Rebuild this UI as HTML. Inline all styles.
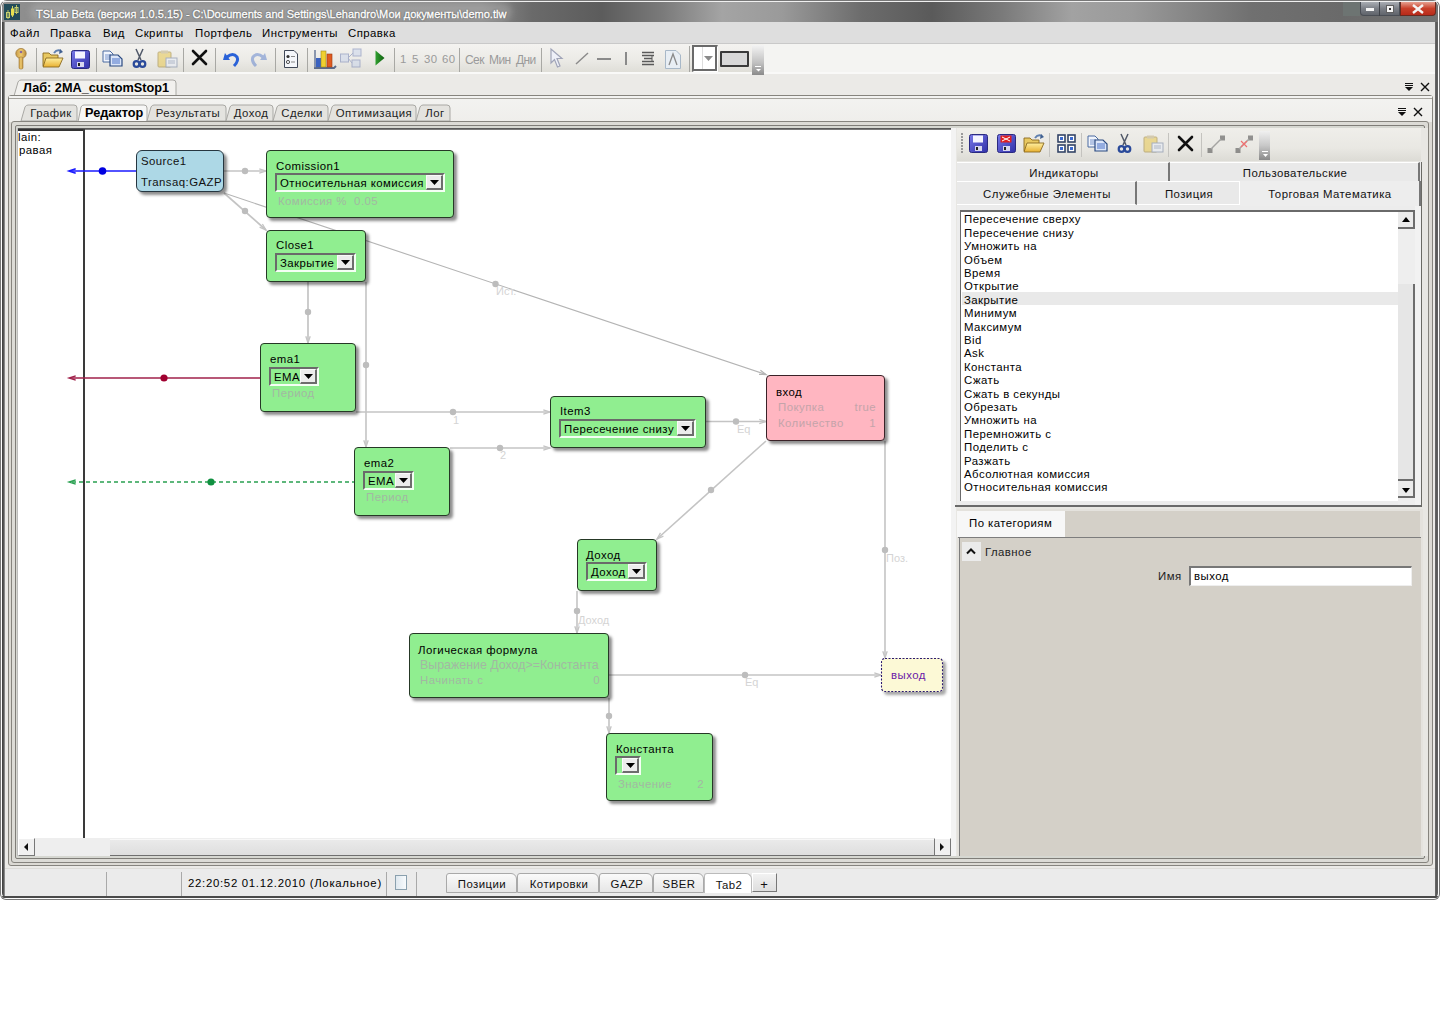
<!DOCTYPE html>
<html><head><meta charset="utf-8">
<style>
*{box-sizing:border-box;margin:0;padding:0}
html,body{width:1440px;height:1024px;overflow:hidden;background:#fff;font-family:"Liberation Sans",sans-serif;font-size:12px;color:#000}
.a{position:absolute}
.t{position:absolute;white-space:nowrap;line-height:1}
svg{position:absolute;overflow:visible}
</style></head><body>
<div class="a" style="left:0px;top:0px;width:1440px;height:900px;background:#777;border-radius:7px 7px 6px 6px"></div><div class="a" style="left:1px;top:1px;width:1438px;height:898px;background:#fdfdfd;border-radius:6px 6px 5px 5px"></div><div class="a" style="left:2px;top:1px;width:1436px;height:897px;background:linear-gradient(90deg,#444 0 1px,#555 1px 2px,#888 2px 3px,#d4d4d0 3px 1433px,#666 1433px 1434px,#5a5a5a 1434px 1435px,#606060 1435px 1436px);border-radius:6px 6px 5px 5px"></div><div class="a" style="left:5px;top:22px;width:1430px;height:874px;background:#e6e6e6"></div><div class="a" style="left:2px;top:2px;width:1436px;height:20px;background:linear-gradient(90deg,#8e8e8e 0px,#8c8c8c 480px,#6a6a6a 530px,#5c5c5c 600px,#7a7a7a 660px,#a4a4a4 720px,#9a9a9a 780px,#6c6c6c 860px,#5a5a5a 930px,#7a7a7a 1000px,#a2a2a2 1070px,#9a9a9a 1130px,#707070 1250px,#6a6a6a 1340px,#727272 1440px);border-radius:5px 5px 0 0"></div><div class="a" style="left:30px;top:3px;width:482px;height:18px;background:rgba(190,190,190,0.35);border-radius:9px;filter:blur(3px)"></div><div class="a" style="left:2px;top:1px;width:1436px;height:1px;background:#f0f0f0;border-radius:5px 5px 0 0"></div><div class="a" style="left:4px;top:4px;width:16px;height:16px;background:#234c5a"></div><svg style="left:4px;top:4px" width="16" height="16"><path d="M4 6 V15" stroke="#b8c060"/><rect x="2.5" y="8.5" width="3" height="5" fill="none" stroke="#c8d070"/><path d="M8.5 2 V13" stroke="#d0d060"/><rect x="7" y="4.5" width="3" height="7" fill="#e8e050"/><path d="M12.5 1 V10" stroke="#b8c060"/><rect x="11" y="3.5" width="3" height="5" fill="none" stroke="#c8d070"/></svg><div class="t" style="left:36px;top:8.7px;font-size:11px;color:#fff;font-weight:400;-webkit-text-stroke:0.35px #fff;text-shadow:0 0 1px #333,0 0 2px #555">TSLab Beta (версия 1.0.5.15) - C:\Documents and Settings\Lehandro\Мои документы\demo.tlw</div><div class="a" style="left:1343px;top:2px;width:17px;height:14px;background:#6d7472"></div><div class="a" style="left:1360px;top:2px;width:40px;height:14px;background:linear-gradient(#a9adb3,#7c8087 50%,#60646b);border:1px solid #4a4e55;border-top:none;border-radius:0 0 0 4px"></div><div class="a" style="left:1379px;top:2px;width:1px;height:14px;background:#3e4248"></div><div class="a" style="left:1366px;top:8px;width:8px;height:3px;background:#f4f4f4"></div><div class="a" style="left:1386px;top:5px;width:8px;height:8px;background:#f4f4f4;border:1px solid #606060"></div><div class="a" style="left:1389px;top:8px;width:2px;height:2px;background:#333"></div><div class="a" style="left:1400px;top:2px;width:36px;height:14px;background:linear-gradient(#e6a090,#c8402a 50%,#b82a1a);border:1px solid #6a2a20;border-top:none;border-radius:0 0 4px 0"></div><svg style="left:1411px;top:4px" width="14" height="10"><path d="M2 1 L12 9 M12 1 L2 9" stroke="#f4f4f4" stroke-width="2.4"/></svg><div class="a" style="left:5px;top:22px;width:1430px;height:21px;background:#dedede"></div><div class="t" style="left:10px;top:28.3px;font-size:11.4px;color:#000;font-weight:400;letter-spacing:0.45px;">Файл</div><div class="t" style="left:50px;top:28.3px;font-size:11.4px;color:#000;font-weight:400;letter-spacing:0.45px;">Правка</div><div class="t" style="left:103px;top:28.3px;font-size:11.4px;color:#000;font-weight:400;letter-spacing:0.45px;">Вид</div><div class="t" style="left:135px;top:28.3px;font-size:11.4px;color:#000;font-weight:400;letter-spacing:0.45px;">Скрипты</div><div class="t" style="left:195px;top:28.3px;font-size:11.4px;color:#000;font-weight:400;letter-spacing:0.45px;">Портфель</div><div class="t" style="left:262px;top:28.3px;font-size:11.4px;color:#000;font-weight:400;letter-spacing:0.45px;">Инструменты</div><div class="t" style="left:348px;top:28.3px;font-size:11.4px;color:#000;font-weight:400;letter-spacing:0.45px;">Справка</div><div class="a" style="left:5px;top:43px;width:1430px;height:1px;background:#c9c9c9"></div><div class="a" style="left:5px;top:44px;width:1430px;height:30px;background:#f4f4f2"></div><div class="a" style="left:5px;top:44px;width:759px;height:28px;background:linear-gradient(#f4f3f0,#ecebe7 55%,#dfded8)"></div><div class="a" style="left:5px;top:72px;width:1430px;height:2px;background:#f9f9f8"></div><div class="a" style="left:5px;top:74px;width:1430px;height:795px;background:#ebeae7"></div><svg style="left:0;top:0" width="1440" height="130"><path d="M14 96 L18 82 Q19 80 21 80 L173 80 Q176 80 176 83 L176 96" fill="#f2f1ee" stroke="#a9a8a4" stroke-width="1"/></svg><div class="t" style="left:23px;top:82.2px;font-size:12.7px;color:#000;font-weight:700;">Лаб: 2MA_customStop1</div><svg style="left:1404px;top:82px" width="30" height="10"><path d="M1 1.5 H9 M1 3.5 H9" stroke="#111" stroke-width="1.2"/><path d="M1 5 L9 5 L5 9 Z" fill="#111"/><path d="M17 1 L25 9 M25 1 L17 9" stroke="#111" stroke-width="1.4"/></svg><div class="a" style="left:8px;top:95px;width:1425px;height:771px;border:1px solid #86847e;background:#dcdad4;border-radius:3px"></div><div class="a" style="left:9px;top:96px;width:1423px;height:26px;background:linear-gradient(#f3f3f1,#efeeeb)"></div><div class="a" style="left:9px;top:98px;width:1423px;height:1px;background:#a6a49e"></div><svg style="left:0;top:0" width="500" height="130"><path d="M21 121 L25 107 Q26 105 28 105 L74 105 Q77 105 77 108 L77 121 Z" fill="#e4e3df" stroke="#a9a8a4"/><path d="M78 122 L81 107 Q82 105 84 105 L144 105 Q147 105 147 108 L147 122" fill="#f7f7f6" stroke="#a9a8a4"/><path d="M147 121 L151 107 Q152 105 154 105 L223 105 Q226 105 226 108 L226 121 Z" fill="#e4e3df" stroke="#a9a8a4"/><path d="M226 121 L230 107 Q231 105 233 105 L270 105 Q273 105 273 108 L273 121 Z" fill="#e4e3df" stroke="#a9a8a4"/><path d="M273 121 L277 107 Q278 105 280 105 L325 105 Q328 105 328 108 L328 121 Z" fill="#e4e3df" stroke="#a9a8a4"/><path d="M328 121 L332 107 Q333 105 335 105 L413 105 Q416 105 416 108 L416 121 Z" fill="#e4e3df" stroke="#a9a8a4"/><path d="M416 121 L420 107 Q421 105 423 105 L447 105 Q450 105 450 108 L450 121 Z" fill="#e4e3df" stroke="#a9a8a4"/></svg><div class="t" style="left:-149px;width:400px;text-align:center;top:108.3px;font-size:11.4px;color:#222;font-weight:400;letter-spacing:0.45px;">График</div><div class="t" style="left:85px;top:107.2px;font-size:12.7px;color:#000;font-weight:700;">Редактор</div><div class="t" style="left:-12px;width:400px;text-align:center;top:108.3px;font-size:11.4px;color:#222;font-weight:400;letter-spacing:0.45px;">Результаты</div><div class="t" style="left:51px;width:400px;text-align:center;top:108.3px;font-size:11.4px;color:#222;font-weight:400;letter-spacing:0.45px;">Доход</div><div class="t" style="left:102px;width:400px;text-align:center;top:108.3px;font-size:11.4px;color:#222;font-weight:400;letter-spacing:0.45px;">Сделки</div><div class="t" style="left:174px;width:400px;text-align:center;top:108.3px;font-size:11.4px;color:#222;font-weight:400;letter-spacing:0.45px;">Оптимизация</div><div class="t" style="left:235px;width:400px;text-align:center;top:108.3px;font-size:11.4px;color:#222;font-weight:400;letter-spacing:0.45px;">Лог</div><svg style="left:1397px;top:107px" width="30" height="10"><path d="M1 1.5 H9 M1 3.5 H9" stroke="#111" stroke-width="1.2"/><path d="M1 5 L9 5 L5 9 Z" fill="#111"/><path d="M17 1 L25 9 M25 1 L17 9" stroke="#111" stroke-width="1.4"/></svg><div class="a" style="left:11px;top:121px;width:1418px;height:742px;border:1px solid #86847e;background:#dcdbd6;border-radius:3px"></div><div class="a" style="left:15px;top:125px;width:1410px;height:734px;border:1px solid #7f7d78;background:#d6d7d1;border-radius:2px"></div><div class="a" style="left:17px;top:128px;width:935px;height:728px;background:#f4f4f4;border:1px solid #bdbdbd"></div><div class="a" style="left:18px;top:129px;width:933px;height:709px;background:#fff"></div><div class="a" style="left:18px;top:128px;width:933px;height:2px;background:linear-gradient(#4a4a4a,#8a8a8a)"></div><div class="a" style="left:18px;top:129px;width:65px;height:2px;background:#333"></div><div class="a" style="left:83px;top:129px;width:2px;height:709px;background:#3a3a3a"></div><div class="t" style="left:18px;top:132.3px;font-size:11.4px;color:#000;font-weight:400;letter-spacing:0.45px;">lain:</div><div class="t" style="left:19px;top:145.3px;font-size:11.4px;color:#000;font-weight:400;letter-spacing:0.45px;">равая</div><div class="a" style="left:18px;top:838px;width:933px;height:18px;background:#eeeeee"></div><div class="a" style="left:18px;top:838px;width:17px;height:18px;background:#f0f0f0;border-right:1px solid #777;border-bottom:1px solid #777;border-top:1px solid #fff;border-left:1px solid #fff"></div><svg style="left:23px;top:843px" width="6" height="8"><path d="M5 0 L1 4 L5 8 Z" fill="#111"/></svg><div class="a" style="left:110px;top:839px;width:824px;height:17px;background:linear-gradient(#eaeaea,#dedede);border-bottom:1px solid #6f6f6f;border-top:1px solid #f8f8f8"></div><div class="a" style="left:934px;top:838px;width:17px;height:18px;background:#f0f0f0;border-right:1px solid #777;border-bottom:1px solid #777;border-top:1px solid #fff;border-left:1px solid #777"></div><svg style="left:940px;top:843px" width="6" height="8"><path d="M0 0 L4 4 L0 8 Z" fill="#111"/></svg><div class="a" style="left:951px;top:128px;width:5px;height:728px;background:#f3f3f3"></div><div class="a" style="left:956px;top:128px;width:472px;height:728px;background:#e8e7e3"></div><div class="a" style="left:957px;top:128px;width:464px;height:33px;background:linear-gradient(#efeeea,#e9e8e3 60%,#dcdbd5)"></div><svg style="left:961px;top:133px" width="3" height="22"><rect x="0" y="0" width="2" height="2" fill="#9a9a9a"/><rect x="0" y="3" width="2" height="2" fill="#9a9a9a"/><rect x="0" y="6" width="2" height="2" fill="#9a9a9a"/><rect x="0" y="9" width="2" height="2" fill="#9a9a9a"/><rect x="0" y="12" width="2" height="2" fill="#9a9a9a"/><rect x="0" y="15" width="2" height="2" fill="#9a9a9a"/><rect x="0" y="18" width="2" height="2" fill="#9a9a9a"/></svg><div class="a" style="left:1049px;top:133px;width:1px;height:24px;background:#c4c3bf"></div><div class="a" style="left:1081px;top:133px;width:1px;height:24px;background:#c4c3bf"></div><div class="a" style="left:1168px;top:133px;width:1px;height:24px;background:#c4c3bf"></div><div class="a" style="left:1201px;top:133px;width:1px;height:24px;background:#c4c3bf"></div><div class="a" style="left:1259px;top:131px;width:11px;height:29px;background:linear-gradient(#f0f0f0,#c8c8c8 50%,#8a8a8a)"></div><svg style="left:1262px;top:151px" width="7" height="7"><path d="M0 0.5 H6" stroke="#fff"/><path d="M1 3 L6 3 L3.5 6 Z" fill="#fff"/></svg><div class="a" style="left:957px;top:162px;width:464px;height:44px;background:#ebebeb"></div><div class="a" style="left:957px;top:162px;width:213px;height:19px;background:#e9e9e9;border-top:1px solid #fff;border-right:2px solid #777"></div><div class="a" style="left:1170px;top:162px;width:250px;height:19px;background:#e9e9e9;border-top:1px solid #fff;border-right:2px solid #777"></div><div class="a" style="left:957px;top:181px;width:180px;height:24px;background:#e9e9e9;border-top:1px solid #fff;border-right:2px solid #777;border-bottom:1px solid #fff"></div><div class="a" style="left:1137px;top:181px;width:103px;height:24px;background:#e9e9e9;border-top:1px solid #fff;border-right:1px solid #fff;border-bottom:1px solid #fff"></div><div class="a" style="left:1240px;top:181px;width:181px;height:26px;background:#ededed;border-right:2px solid #777"></div><div class="t" style="left:864px;width:400px;text-align:center;top:168.3px;font-size:11.4px;color:#111;font-weight:400;letter-spacing:0.45px;">Индикаторы</div><div class="t" style="left:1095px;width:400px;text-align:center;top:168.3px;font-size:11.4px;color:#111;font-weight:400;letter-spacing:0.45px;">Пользовательские</div><div class="t" style="left:847px;width:400px;text-align:center;top:189.3px;font-size:11.4px;color:#111;font-weight:400;letter-spacing:0.45px;">Служебные Элементы</div><div class="t" style="left:989px;width:400px;text-align:center;top:189.3px;font-size:11.4px;color:#111;font-weight:400;letter-spacing:0.45px;">Позиция</div><div class="t" style="left:1130px;width:400px;text-align:center;top:189.3px;font-size:11.4px;color:#111;font-weight:400;letter-spacing:0.45px;">Торговая Математика</div><div class="a" style="left:957px;top:206px;width:464px;height:301px;background:#ececec"></div><div class="a" style="left:960px;top:210px;width:455px;height:291px;background:#fff;border-top:2px solid #6a6a6a;border-left:1px solid #6a6a6a"></div><div class="a" style="left:1415px;top:206px;width:6px;height:299px;background:#f2f2f2"></div><div class="a" style="left:955px;top:505px;width:466px;height:2px;background:#6a6a6a"></div><div class="a" style="left:1421px;top:162px;width:1px;height:345px;background:#6a6a64"></div><div class="a" style="left:962px;top:292px;width:436px;height:13px;background:#e9e9e9"></div><div class="t" style="left:964px;top:214.3px;font-size:11.4px;color:#000;font-weight:400;letter-spacing:0.45px;">Пересечение сверху</div><div class="t" style="left:964px;top:227.7px;font-size:11.4px;color:#000;font-weight:400;letter-spacing:0.45px;">Пересечение снизу</div><div class="t" style="left:964px;top:241.1px;font-size:11.4px;color:#000;font-weight:400;letter-spacing:0.45px;">Умножить на</div><div class="t" style="left:964px;top:254.5px;font-size:11.4px;color:#000;font-weight:400;letter-spacing:0.45px;">Объем</div><div class="t" style="left:964px;top:267.9px;font-size:11.4px;color:#000;font-weight:400;letter-spacing:0.45px;">Время</div><div class="t" style="left:964px;top:281.3px;font-size:11.4px;color:#000;font-weight:400;letter-spacing:0.45px;">Открытие</div><div class="t" style="left:964px;top:294.7px;font-size:11.4px;color:#000;font-weight:400;letter-spacing:0.45px;">Закрытие</div><div class="t" style="left:964px;top:308.1px;font-size:11.4px;color:#000;font-weight:400;letter-spacing:0.45px;">Минимум</div><div class="t" style="left:964px;top:321.5px;font-size:11.4px;color:#000;font-weight:400;letter-spacing:0.45px;">Максимум</div><div class="t" style="left:964px;top:334.9px;font-size:11.4px;color:#000;font-weight:400;letter-spacing:0.45px;">Bid</div><div class="t" style="left:964px;top:348.3px;font-size:11.4px;color:#000;font-weight:400;letter-spacing:0.45px;">Ask</div><div class="t" style="left:964px;top:361.7px;font-size:11.4px;color:#000;font-weight:400;letter-spacing:0.45px;">Константа</div><div class="t" style="left:964px;top:375.1px;font-size:11.4px;color:#000;font-weight:400;letter-spacing:0.45px;">Сжать</div><div class="t" style="left:964px;top:388.5px;font-size:11.4px;color:#000;font-weight:400;letter-spacing:0.45px;">Сжать в секунды</div><div class="t" style="left:964px;top:401.9px;font-size:11.4px;color:#000;font-weight:400;letter-spacing:0.45px;">Обрезать</div><div class="t" style="left:964px;top:415.3px;font-size:11.4px;color:#000;font-weight:400;letter-spacing:0.45px;">Умножить на</div><div class="t" style="left:964px;top:428.7px;font-size:11.4px;color:#000;font-weight:400;letter-spacing:0.45px;">Перемножить с</div><div class="t" style="left:964px;top:442.1px;font-size:11.4px;color:#000;font-weight:400;letter-spacing:0.45px;">Поделить с</div><div class="t" style="left:964px;top:455.5px;font-size:11.4px;color:#000;font-weight:400;letter-spacing:0.45px;">Разжать</div><div class="t" style="left:964px;top:468.9px;font-size:11.4px;color:#000;font-weight:400;letter-spacing:0.45px;">Абсолютная комиссия</div><div class="t" style="left:964px;top:482.3px;font-size:11.4px;color:#000;font-weight:400;letter-spacing:0.45px;">Относительная комиссия</div><div class="a" style="left:1398px;top:212px;width:17px;height:293px;background:#eeeeee"></div><div class="a" style="left:1398px;top:212px;width:17px;height:17px;background:#ebebeb;border-right:2px solid #6d6d6d;border-bottom:2px solid #6d6d6d"></div><svg style="left:1402px;top:217px" width="8" height="5"><path d="M0 5 L4 0 L8 5 Z" fill="#000"/></svg><div class="a" style="left:1398px;top:284px;width:17px;height:197px;background:#e6e6e6;border-right:2px solid #6d6d6d;border-bottom:2px solid #6d6d6d"></div><div class="a" style="left:1398px;top:481px;width:17px;height:17px;background:#ebebeb;border-right:2px solid #6d6d6d;border-bottom:2px solid #6d6d6d"></div><svg style="left:1402px;top:488px" width="8" height="5"><path d="M0 0 L8 0 L4 5 Z" fill="#000"/></svg><div class="a" style="left:957px;top:509px;width:466px;height:347px;background:#e4e2dd"></div><div class="a" style="left:957px;top:511px;width:108px;height:26px;background:#f7f7f7"></div><div class="t" style="left:969px;top:518.3px;font-size:11.4px;color:#000;font-weight:400;letter-spacing:0.45px;">По категориям</div><div class="a" style="left:1065px;top:511px;width:355px;height:26px;background:#d4d0c8"></div><div class="a" style="left:958px;top:537px;width:463px;height:1px;background:#7d7d7d"></div><div class="a" style="left:959px;top:538px;width:462px;height:318px;background:#d4d0c8;border-left:1px solid #7d7d7d"></div><div class="a" style="left:962px;top:542px;width:19px;height:19px;background:#ebebeb"></div><svg style="left:966px;top:548px" width="10" height="6"><path d="M1 5.5 L5 1.5 L9 5.5" stroke="#111" stroke-width="2" fill="none"/></svg><div class="t" style="left:985px;top:547.3px;font-size:11.4px;color:#222;font-weight:400;letter-spacing:0.45px;">Главное</div><div class="t" style="left:1158px;top:571.3px;font-size:11.4px;color:#222;font-weight:400;letter-spacing:0.45px;">Имя</div><div class="a" style="left:1189px;top:566px;width:223px;height:20px;background:#fff;border-top:2px solid #777;border-left:2px solid #777;border-right:1px solid #eee;border-bottom:1px solid #eee"></div><div class="t" style="left:1194px;top:571.3px;font-size:11.4px;color:#000;font-weight:400;letter-spacing:0.45px;">выход</div><div class="a" style="left:5px;top:869px;width:1430px;height:27px;background:#ebebeb"></div><div class="a" style="left:2px;top:896px;width:1436px;height:2px;background:#4a4a4a;border-radius:0 0 5px 5px"></div><div class="a" style="left:5px;top:868px;width:1430px;height:1px;background:#dddcd8"></div><div class="a" style="left:106px;top:872px;width:1px;height:24px;background:#a9a9a9"></div><div class="a" style="left:181px;top:872px;width:1px;height:24px;background:#a9a9a9"></div><div class="t" style="left:188px;top:878.3px;font-size:11.4px;color:#000;font-weight:400;letter-spacing:0.7px;">22:20:52 01.12.2010 (Локальное)</div><div class="a" style="left:386px;top:872px;width:1px;height:24px;background:#a9a9a9"></div><div class="a" style="left:395px;top:875px;width:12px;height:15px;background:linear-gradient(90deg,#dfe8ef,#f8fbfd);border:1px solid #8aa0ae"></div><div class="a" style="left:416px;top:872px;width:1px;height:24px;background:#a9a9a9"></div><div class="a" style="left:446px;top:873px;width:71px;height:20px;background:linear-gradient(#fafafa,#e6e6e6);border:1px solid #a9a9a9;border-radius:3px 6px 0 0"></div><div class="t" style="left:282px;width:400px;text-align:center;top:879.3px;font-size:11.4px;color:#111;font-weight:400;letter-spacing:0.45px;">Позиции</div><div class="a" style="left:517px;top:873px;width:82px;height:20px;background:linear-gradient(#fafafa,#e6e6e6);border:1px solid #a9a9a9;border-radius:3px 6px 0 0"></div><div class="t" style="left:359px;width:400px;text-align:center;top:879.3px;font-size:11.4px;color:#111;font-weight:400;letter-spacing:0.45px;">Котировки</div><div class="a" style="left:599px;top:873px;width:54px;height:20px;background:linear-gradient(#fafafa,#e6e6e6);border:1px solid #a9a9a9;border-radius:3px 6px 0 0"></div><div class="t" style="left:427px;width:400px;text-align:center;top:879.3px;font-size:11.4px;color:#111;font-weight:400;letter-spacing:0.45px;">GAZP</div><div class="a" style="left:653px;top:873px;width:51px;height:20px;background:linear-gradient(#fafafa,#e6e6e6);border:1px solid #a9a9a9;border-radius:3px 6px 0 0"></div><div class="t" style="left:479px;width:400px;text-align:center;top:879.3px;font-size:11.4px;color:#111;font-weight:400;letter-spacing:0.45px;">SBER</div><div class="a" style="left:704px;top:873px;width:48px;height:20px;background:#fff;border:1px solid #bbb;border-radius:3px 6px 0 0;border-bottom:none"></div><div class="t" style="left:529px;width:400px;text-align:center;top:880.3px;font-size:11.4px;color:#111;font-weight:400;letter-spacing:0.45px;">Tab2</div><div class="a" style="left:752px;top:873px;width:25px;height:19px;background:linear-gradient(#f2f2f2,#dedede);border:1px solid #777;border-top-color:#fff;border-left-color:#fff"></div><div class="t" style="left:564px;width:400px;text-align:center;top:878.0px;font-size:13px;color:#111;font-weight:400;">+</div><svg style="left:0;top:0" width="1440" height="900"><line x1="224" y1="171" x2="266" y2="171" stroke="#c4c4c4" stroke-width="1.7"/><circle cx="245" cy="171" r="3.2" fill="#bdbdbd"/><path d="M259.3 173.2 L266 171 L259.3 168.8" stroke="#c4c4c4" stroke-width="1.3" fill="none"/><line x1="224" y1="193" x2="266" y2="230" stroke="#c4c4c4" stroke-width="1.7"/><circle cx="245" cy="211" r="3.2" fill="#bdbdbd"/><path d="M259.6 227.2 L266 230 L262.4 224.0" stroke="#c4c4c4" stroke-width="1.3" fill="none"/><line x1="224" y1="193" x2="766" y2="374.5" stroke="#b4b4b4" stroke-width="1.1"/><circle cx="495.5" cy="284" r="3.2" fill="#bdbdbd"/><path d="M759.0 374.4 L766 374.5 L760.4 370.3" stroke="#b4b4b4" stroke-width="1.3" fill="none"/><line x1="308" y1="282" x2="308" y2="343" stroke="#c4c4c4" stroke-width="1.7"/><circle cx="308" cy="312" r="3.2" fill="#bdbdbd"/><path d="M305.8 336.3 L308 343 L310.2 336.3" stroke="#c4c4c4" stroke-width="1.3" fill="none"/><line x1="366" y1="282" x2="366" y2="447" stroke="#c4c4c4" stroke-width="1.6"/><circle cx="366" cy="365" r="3.2" fill="#bdbdbd"/><path d="M363.8 440.3 L366 447 L368.2 440.3" stroke="#c4c4c4" stroke-width="1.3" fill="none"/><line x1="356" y1="412" x2="550" y2="412" stroke="#c4c4c4" stroke-width="1.7"/><circle cx="453" cy="412" r="3.2" fill="#bdbdbd"/><path d="M543.3 414.2 L550 412 L543.3 409.8" stroke="#c4c4c4" stroke-width="1.3" fill="none"/><line x1="450" y1="448" x2="550" y2="448" stroke="#c4c4c4" stroke-width="1.7"/><circle cx="500" cy="448" r="3.2" fill="#bdbdbd"/><path d="M543.3 450.2 L550 448 L543.3 445.8" stroke="#c4c4c4" stroke-width="1.3" fill="none"/><line x1="706" y1="421.5" x2="766" y2="421.5" stroke="#c4c4c4" stroke-width="1.7"/><circle cx="736" cy="421.5" r="3.2" fill="#bdbdbd"/><path d="M759.3 423.7 L766 421.5 L759.3 419.3" stroke="#c4c4c4" stroke-width="1.3" fill="none"/><line x1="766" y1="441" x2="657" y2="539" stroke="#c4c4c4" stroke-width="1.6"/><circle cx="711" cy="490" r="3.2" fill="#bdbdbd"/><path d="M660.5 532.9 L657 539 L663.4 536.2" stroke="#c4c4c4" stroke-width="1.3" fill="none"/><line x1="885" y1="441" x2="885" y2="658" stroke="#c4c4c4" stroke-width="1.6"/><circle cx="885" cy="550" r="3.2" fill="#bdbdbd"/><path d="M882.8 651.3 L885 658 L887.2 651.3" stroke="#c4c4c4" stroke-width="1.3" fill="none"/><line x1="577" y1="591" x2="577" y2="633" stroke="#c4c4c4" stroke-width="1.6"/><circle cx="577" cy="611" r="3.2" fill="#bdbdbd"/><path d="M574.8 626.3 L577 633 L579.2 626.3" stroke="#c4c4c4" stroke-width="1.3" fill="none"/><line x1="609" y1="675" x2="881" y2="675" stroke="#c4c4c4" stroke-width="1.7"/><circle cx="745" cy="675" r="3.2" fill="#bdbdbd"/><path d="M874.3 677.2 L881 675 L874.3 672.8" stroke="#c4c4c4" stroke-width="1.3" fill="none"/><line x1="609" y1="698" x2="609" y2="733" stroke="#c4c4c4" stroke-width="1.6"/><circle cx="609" cy="716" r="3.2" fill="#bdbdbd"/><path d="M606.8 726.3 L609 733 L611.2 726.3" stroke="#c4c4c4" stroke-width="1.3" fill="none"/><line x1="70" y1="171" x2="136" y2="171" stroke="#1a1aff" stroke-width="1.6"/><circle cx="102.5" cy="171" r="3.8" fill="#0000e0"/><path d="M75.7 168.8 L69 171 L75.7 173.2" stroke="#1a1aff" stroke-width="1.6" fill="none"/><line x1="70" y1="378" x2="260" y2="378" stroke="#a0204a" stroke-width="1.4"/><circle cx="164" cy="378" r="3.6" fill="#a00030"/><path d="M75.7 375.8 L69 378 L75.7 380.2" stroke="#a0204a" stroke-width="1.4" fill="none"/><line x1="72" y1="482" x2="354" y2="482" stroke="#28a050" stroke-width="1.4" stroke-dasharray="4 3"/><circle cx="211" cy="482" r="3.6" fill="#109040"/><path d="M75.7 479.8 L69 482 L75.7 484.2" stroke="#28a050" stroke-width="1.4" fill="none"/></svg><div class="t" style="left:496px;top:285.7px;font-size:11px;color:#d4d4d4;font-weight:400;">Ист.</div><div class="t" style="left:256px;width:400px;text-align:center;top:414.7px;font-size:11px;color:#d4d4d4;font-weight:400;">1</div><div class="t" style="left:303px;width:400px;text-align:center;top:449.7px;font-size:11px;color:#d4d4d4;font-weight:400;">2</div><div class="t" style="left:737px;top:423.7px;font-size:11px;color:#d4d4d4;font-weight:400;">Eq</div><div class="t" style="left:886px;top:552.7px;font-size:11px;color:#d4d4d4;font-weight:400;">Поз.</div><div class="t" style="left:578px;top:614.7px;font-size:11px;color:#d4d4d4;font-weight:400;">Доход</div><div class="t" style="left:745px;top:676.7px;font-size:11px;color:#d4d4d4;font-weight:400;">Eq</div><div class="a" style="left:136px;top:150px;width:88px;height:42px;background:#add8e6;border:1px solid #263640;border-radius:6px;box-shadow:3px 3px 3px rgba(0,0,0,0.45)"></div><div class="t" style="left:141px;top:156.3px;font-size:11.4px;color:#111;font-weight:400;letter-spacing:0.45px;">Source1</div><div class="t" style="left:141px;top:177.3px;font-size:11.4px;color:#111;font-weight:400;letter-spacing:0.45px;">Transaq:GAZP</div><div class="a" style="left:266px;top:150px;width:188px;height:68px;background:#90ee90;border:1px solid #263826;border-radius:4px;box-shadow:3px 3px 3px rgba(0,0,0,0.45)"></div><div class="t" style="left:276px;top:161.3px;font-size:11.4px;color:#000;font-weight:400;letter-spacing:0.45px;">Comission1</div><div class="a" style="left:275px;top:173px;width:170px;height:19px;border-top:2px solid #6a6a6a;border-left:2px solid #6a6a6a;border-right:2px solid #f4fff4;border-bottom:2px solid #f4fff4"></div><div class="a" style="left:426px;top:175px;width:17px;height:15px;background:#ececec;border-right:2px solid #6d6d6d;border-bottom:2px solid #6d6d6d;border-top:1px solid #fafafa;border-left:1px solid #fafafa"></div><svg style="left:430px;top:180.0px" width="9" height="5"><path d="M0 0 L9 0 L4.5 5 Z" fill="#000"/></svg><div class="t" style="left:280px;top:178.3px;font-size:11.4px;color:#000;font-weight:400;letter-spacing:0.45px;">Относительная комиссия</div><div class="t" style="left:278px;top:196.3px;font-size:11.4px;color:#a2b8a2;font-weight:400;letter-spacing:0.45px;">Комиссия %&nbsp; 0.05</div><div class="a" style="left:266px;top:230px;width:100px;height:52px;background:#90ee90;border:1px solid #263826;border-radius:4px;box-shadow:3px 3px 3px rgba(0,0,0,0.45)"></div><div class="t" style="left:276px;top:240.3px;font-size:11.4px;color:#000;font-weight:400;letter-spacing:0.45px;">Close1</div><div class="a" style="left:275px;top:253px;width:81px;height:19px;border-top:2px solid #6a6a6a;border-left:2px solid #6a6a6a;border-right:2px solid #f4fff4;border-bottom:2px solid #f4fff4"></div><div class="a" style="left:337px;top:255px;width:17px;height:15px;background:#ececec;border-right:2px solid #6d6d6d;border-bottom:2px solid #6d6d6d;border-top:1px solid #fafafa;border-left:1px solid #fafafa"></div><svg style="left:341px;top:260.0px" width="9" height="5"><path d="M0 0 L9 0 L4.5 5 Z" fill="#000"/></svg><div class="t" style="left:280px;top:258.3px;font-size:11.4px;color:#000;font-weight:400;letter-spacing:0.45px;">Закрытие</div><div class="a" style="left:260px;top:343px;width:96px;height:69px;background:#90ee90;border:1px solid #263826;border-radius:4px;box-shadow:3px 3px 3px rgba(0,0,0,0.45)"></div><div class="t" style="left:270px;top:354.3px;font-size:11.4px;color:#000;font-weight:400;letter-spacing:0.45px;">ema1</div><div class="a" style="left:269px;top:367px;width:50px;height:19px;border-top:2px solid #6a6a6a;border-left:2px solid #6a6a6a;border-right:2px solid #f4fff4;border-bottom:2px solid #f4fff4"></div><div class="a" style="left:300px;top:369px;width:17px;height:15px;background:#ececec;border-right:2px solid #6d6d6d;border-bottom:2px solid #6d6d6d;border-top:1px solid #fafafa;border-left:1px solid #fafafa"></div><svg style="left:304px;top:374.0px" width="9" height="5"><path d="M0 0 L9 0 L4.5 5 Z" fill="#000"/></svg><div class="t" style="left:274px;top:372.3px;font-size:11.4px;color:#000;font-weight:400;letter-spacing:0.45px;">EMA</div><div class="t" style="left:272px;top:388.3px;font-size:11.4px;color:#a2b8a2;font-weight:400;letter-spacing:0.45px;">Период</div><div class="a" style="left:354px;top:447px;width:96px;height:69px;background:#90ee90;border:1px solid #263826;border-radius:4px;box-shadow:3px 3px 3px rgba(0,0,0,0.45)"></div><div class="t" style="left:364px;top:458.3px;font-size:11.4px;color:#000;font-weight:400;letter-spacing:0.45px;">ema2</div><div class="a" style="left:363px;top:471px;width:51px;height:19px;border-top:2px solid #6a6a6a;border-left:2px solid #6a6a6a;border-right:2px solid #f4fff4;border-bottom:2px solid #f4fff4"></div><div class="a" style="left:395px;top:473px;width:17px;height:15px;background:#ececec;border-right:2px solid #6d6d6d;border-bottom:2px solid #6d6d6d;border-top:1px solid #fafafa;border-left:1px solid #fafafa"></div><svg style="left:399px;top:478.0px" width="9" height="5"><path d="M0 0 L9 0 L4.5 5 Z" fill="#000"/></svg><div class="t" style="left:368px;top:476.3px;font-size:11.4px;color:#000;font-weight:400;letter-spacing:0.45px;">EMA</div><div class="t" style="left:366px;top:492.3px;font-size:11.4px;color:#a2b8a2;font-weight:400;letter-spacing:0.45px;">Период</div><div class="a" style="left:550px;top:396px;width:156px;height:52px;background:#90ee90;border:1px solid #263826;border-radius:4px;box-shadow:3px 3px 3px rgba(0,0,0,0.45)"></div><div class="t" style="left:560px;top:406.3px;font-size:11.4px;color:#000;font-weight:400;letter-spacing:0.45px;">Item3</div><div class="a" style="left:559px;top:419px;width:137px;height:19px;border-top:2px solid #6a6a6a;border-left:2px solid #6a6a6a;border-right:2px solid #f4fff4;border-bottom:2px solid #f4fff4"></div><div class="a" style="left:677px;top:421px;width:17px;height:15px;background:#ececec;border-right:2px solid #6d6d6d;border-bottom:2px solid #6d6d6d;border-top:1px solid #fafafa;border-left:1px solid #fafafa"></div><svg style="left:681px;top:426.0px" width="9" height="5"><path d="M0 0 L9 0 L4.5 5 Z" fill="#000"/></svg><div class="t" style="left:564px;top:424.3px;font-size:11.4px;color:#000;font-weight:400;letter-spacing:0.45px;">Пересечение снизу</div><div class="a" style="left:766px;top:375px;width:119px;height:66px;background:#ffb6c1;border:1px solid #3a2228;border-radius:4px;box-shadow:3px 3px 3px rgba(0,0,0,0.45)"></div><div class="t" style="left:776px;top:387.3px;font-size:11.4px;color:#000;font-weight:400;letter-spacing:0.45px;">вход</div><div class="t" style="left:778px;top:402.3px;font-size:11.4px;color:#c4a4aa;font-weight:400;letter-spacing:0.45px;">Покупка</div><div class="t" style="right:564px;top:402.3px;font-size:11.4px;color:#c4a4aa;font-weight:400;letter-spacing:0.45px;">true</div><div class="t" style="left:778px;top:418.3px;font-size:11.4px;color:#c4a4aa;font-weight:400;letter-spacing:0.45px;">Количество</div><div class="t" style="right:564px;top:418.3px;font-size:11.4px;color:#c4a4aa;font-weight:400;letter-spacing:0.45px;">1</div><div class="a" style="left:577px;top:539px;width:80px;height:52px;background:#90ee90;border:1px solid #263826;border-radius:4px;box-shadow:3px 3px 3px rgba(0,0,0,0.45)"></div><div class="t" style="left:586px;top:550.3px;font-size:11.4px;color:#000;font-weight:400;letter-spacing:0.45px;">Доход</div><div class="a" style="left:586px;top:562px;width:61px;height:19px;border-top:2px solid #6a6a6a;border-left:2px solid #6a6a6a;border-right:2px solid #f4fff4;border-bottom:2px solid #f4fff4"></div><div class="a" style="left:628px;top:564px;width:17px;height:15px;background:#ececec;border-right:2px solid #6d6d6d;border-bottom:2px solid #6d6d6d;border-top:1px solid #fafafa;border-left:1px solid #fafafa"></div><svg style="left:632px;top:569.0px" width="9" height="5"><path d="M0 0 L9 0 L4.5 5 Z" fill="#000"/></svg><div class="t" style="left:591px;top:567.3px;font-size:11.4px;color:#000;font-weight:400;letter-spacing:0.45px;">Доход</div><div class="a" style="left:409px;top:633px;width:200px;height:65px;background:#90ee90;border:1px solid #263826;border-radius:4px;box-shadow:3px 3px 3px rgba(0,0,0,0.45)"></div><div class="t" style="left:418px;top:645.3px;font-size:11.4px;color:#000;font-weight:400;letter-spacing:0.45px;">Логическая формула</div><div class="t" style="left:420px;top:658.5px;font-size:12.4px;color:#a2b8a2;font-weight:400;">Выражение Доход>=Константа</div><div class="t" style="left:420px;top:675.3px;font-size:11.4px;color:#a2b8a2;font-weight:400;letter-spacing:0.45px;">Начинать с</div><div class="t" style="right:840px;top:675.3px;font-size:11.4px;color:#a2b8a2;font-weight:400;letter-spacing:0.45px;">0</div><div class="a" style="left:606px;top:733px;width:107px;height:68px;background:#90ee90;border:1px solid #263826;border-radius:4px;box-shadow:3px 3px 3px rgba(0,0,0,0.45)"></div><div class="t" style="left:616px;top:744.3px;font-size:11.4px;color:#000;font-weight:400;letter-spacing:0.45px;">Константа</div><div class="a" style="left:615px;top:756px;width:26px;height:19px;border-top:2px solid #6a6a6a;border-left:2px solid #6a6a6a;border-right:2px solid #f4fff4;border-bottom:2px solid #f4fff4"></div><div class="a" style="left:622px;top:758px;width:17px;height:15px;background:#ececec;border-right:2px solid #6d6d6d;border-bottom:2px solid #6d6d6d;border-top:1px solid #fafafa;border-left:1px solid #fafafa"></div><svg style="left:626px;top:763.0px" width="9" height="5"><path d="M0 0 L9 0 L4.5 5 Z" fill="#000"/></svg><div class="t" style="left:618px;top:779.3px;font-size:11.4px;color:#a2b8a2;font-weight:400;letter-spacing:0.45px;">Значение</div><div class="t" style="right:736px;top:779.3px;font-size:11.4px;color:#a2b8a2;font-weight:400;letter-spacing:0.45px;">2</div><div class="a" style="left:881px;top:658px;width:62px;height:34px;background:#fcf9d6;border-radius:4px;box-shadow:3px 3px 3px rgba(0,0,0,0.35)"></div><svg style="left:881px;top:658px" width="62" height="34"><rect x="0.5" y="0.5" width="61" height="33" rx="3.5" fill="none" stroke="#2a1870" stroke-width="1.1" stroke-dasharray="2 1.5"/></svg><div class="t" style="left:891px;top:670.3px;font-size:11.4px;color:#6a1aa8;font-weight:400;letter-spacing:0.45px;">выход</div><svg style="left:15px;top:48px" width="12" height="22" viewBox="0 0 12 22"><defs><linearGradient id="kg" x1="0" x2="1"><stop offset="0" stop-color="#c89a48"/><stop offset="0.5" stop-color="#f0cc70"/><stop offset="1" stop-color="#b8883a"/></linearGradient></defs><ellipse cx="6" cy="5.5" rx="5.2" ry="5" fill="url(#kg)" stroke="#a07838" stroke-width="0.8"/><rect x="4" y="9" width="4" height="12" rx="1.5" fill="url(#kg)" stroke="#a07838" stroke-width="0.6"/><circle cx="6" cy="4" r="1.3" fill="#8a6a9a"/></svg><div class="a" style="left:36px;top:48px;width:1px;height:24px;background:#a8a8a4"></div><svg style="left:42px;top:49px" width="22" height="19" viewBox="0 0 22 19"><defs><linearGradient id="fg" x1="0" y1="0" x2="0" y2="1"><stop offset="0" stop-color="#fff0a0"/><stop offset="1" stop-color="#e8b030"/></linearGradient></defs><path d="M1 4 L7 4 L9 6 L16 6 L16 17 L1 17 Z" fill="#e8c860" stroke="#8a6a20" stroke-width="0.9"/><path d="M4 9 L21 9 L17 18 L1 18 Z" fill="url(#fg)" stroke="#8a6a20" stroke-width="0.9"/><path d="M12 4 Q15 0 19 2" stroke="#6080b0" stroke-width="2" fill="none"/><path d="M18 0 L21 3 L17 5 Z" fill="#406090"/></svg><svg style="left:71px;top:50px" width="19" height="19" viewBox="0 0 19 19"><defs><linearGradient id="sg" x1="0" y1="0" x2="1" y2="1"><stop offset="0" stop-color="#7878e8"/><stop offset="1" stop-color="#3030a8"/></linearGradient></defs><rect x="0.5" y="0.5" width="18" height="18" rx="2" fill="url(#sg)" stroke="#2a2a80" stroke-width="1"/><rect x="4" y="1.5" width="10" height="7" fill="#f4f4ff"/><rect x="6" y="12" width="7" height="5" fill="#d8d8f0"/><rect x="7" y="13" width="2" height="3" fill="#222"/></svg><div class="a" style="left:96px;top:48px;width:1px;height:24px;background:#a8a8a4"></div><svg style="left:102px;top:50px" width="21" height="17" viewBox="0 0 21 17"><path d="M1 1 L8 1 L11 4 L11 12 L1 12 Z" fill="#f0f4fc" stroke="#4a6aa0" stroke-width="1"/><path d="M3 5 H9 M3 7 H9 M3 9 H9" stroke="#6a8ac8" stroke-width="0.9"/><path d="M8 5 L16 5 L20 9 L20 16 L8 16 Z" fill="#dce6f8" stroke="#2a4a80" stroke-width="1.2"/><path d="M10 9 H18 M10 11 H18 M10 13 H18" stroke="#4a72c8" stroke-width="1"/></svg><svg style="left:133px;top:49px" width="13" height="19" viewBox="0 0 13 19"><path d="M3 0 L8 11 M10 0 L5 11" stroke="#505868" stroke-width="1.5"/><circle cx="3.5" cy="15" r="2.8" fill="none" stroke="#2a4a9a" stroke-width="2.2"/><circle cx="9.5" cy="15" r="2.8" fill="none" stroke="#2a4a9a" stroke-width="2.2"/></svg><svg style="left:157px;top:50px" width="21" height="18" viewBox="0 0 21 18"><g opacity="0.55"><rect x="1" y="2" width="13" height="15" rx="1" fill="#e8c850" stroke="#9a8030"/><rect x="4" y="0.5" width="7" height="3" fill="#c0b080"/><rect x="9" y="8" width="11" height="9" fill="#e8eef8" stroke="#7080a0"/><path d="M11 11 H18 M11 13 H18" stroke="#8090b0"/></g></svg><div class="a" style="left:183px;top:48px;width:1px;height:24px;background:#a8a8a4"></div><svg style="left:191px;top:49px" width="17" height="17" viewBox="0 0 17 17"><path d="M2 2 L15 15 M15 2 L2 15" stroke="#111" stroke-width="2.6" stroke-linecap="round"/></svg><div class="a" style="left:215px;top:48px;width:1px;height:24px;background:#a8a8a4"></div><svg style="left:223px;top:50px" width="17" height="17" viewBox="0 0 17 17"><g opacity="1"><path d="M4 7 Q10 2 14 7 Q16 11 11 16" stroke="#2a62d8" stroke-width="3" fill="none"/><path d="M0 10 L7 10 L2 3 Z" fill="#2a62d8"/></g></svg><svg style="left:250px;top:50px" width="17" height="17" viewBox="0 0 17 17"><g opacity="0.45"><path d="M13 7 Q7 2 3 7 Q1 11 6 16" stroke="#4a72c8" stroke-width="3" fill="none"/><path d="M17 10 L10 10 L15 3 Z" fill="#4a72c8"/></g></svg><div class="a" style="left:275px;top:48px;width:1px;height:24px;background:#a8a8a4"></div><svg style="left:284px;top:50px" width="14" height="18" viewBox="0 0 14 18"><path d="M0.5 0.5 L10 0.5 L13.5 4 L13.5 17.5 L0.5 17.5 Z" fill="#f4f6fa" stroke="#404858"/><circle cx="4" cy="6.5" r="1.6" fill="#333"/><circle cx="4" cy="12" r="1.6" fill="none" stroke="#555"/><path d="M7 6.5 H11 M7 12 H11" stroke="#888"/></svg><div class="a" style="left:307px;top:48px;width:1px;height:24px;background:#a8a8a4"></div><svg style="left:313px;top:48px" width="23" height="22" viewBox="0 0 23 22"><path d="M1 20 L21 20 L23 18" stroke="#5a6a8a" stroke-width="2" fill="none"/><path d="M2 2 L2 20" stroke="#6a7a9a" stroke-width="1.5"/><rect x="3" y="10" width="5" height="9" fill="#3a62c0"/><rect x="8" y="3" width="5" height="16" fill="#f0d030" stroke="#a08a20" stroke-width="0.6"/><rect x="14" y="6" width="5" height="13" fill="#e05a20" stroke="#9a3a10" stroke-width="0.6"/></svg><svg style="left:340px;top:48px" width="22" height="20" viewBox="0 0 22 20"><g opacity="0.5"><rect x="0.5" y="6" width="8" height="8" fill="#c8d4ec" stroke="#6a7ab0"/><rect x="13" y="1" width="8" height="7" fill="#c8d4ec" stroke="#6a7ab0"/><rect x="12" y="12" width="8" height="7" fill="#c8d4ec" stroke="#6a7ab0"/><path d="M8 10 L13 5 M8 10 L12 15" stroke="#6a7ab0"/></g></svg><svg style="left:375px;top:50px" width="10" height="16" viewBox="0 0 10 16"><defs><linearGradient id="pg" x1="0" x2="1"><stop offset="0" stop-color="#30a030"/><stop offset="1" stop-color="#106010"/></linearGradient></defs><path d="M0.5 0.5 L9.5 8 L0.5 15.5 Z" fill="url(#pg)"/></svg><div class="a" style="left:394px;top:48px;width:1px;height:24px;background:#a8a8a4"></div><div class="t" style="left:400px;top:54.3px;font-size:11.4px;color:#9a9a9a;font-weight:400;letter-spacing:0.45px;">1</div><div class="t" style="left:412px;top:54.3px;font-size:11.4px;color:#9a9a9a;font-weight:400;letter-spacing:0.45px;">5</div><div class="t" style="left:424px;top:54.3px;font-size:11.4px;color:#9a9a9a;font-weight:400;letter-spacing:0.45px;">30</div><div class="t" style="left:442px;top:54.3px;font-size:11.4px;color:#9a9a9a;font-weight:400;letter-spacing:0.45px;">60</div><div class="a" style="left:459px;top:48px;width:1px;height:24px;background:#a8a8a4"></div><div class="t" style="left:465px;top:53.8px;font-size:12px;color:#9a9a9a;font-weight:400;letter-spacing:-0.6px;">Сек</div><div class="t" style="left:489px;top:53.8px;font-size:12px;color:#9a9a9a;font-weight:400;letter-spacing:-0.6px;">Мин</div><div class="t" style="left:516px;top:53.8px;font-size:12px;color:#9a9a9a;font-weight:400;letter-spacing:-0.6px;">Дни</div><div class="a" style="left:541px;top:48px;width:1px;height:24px;background:#a8a8a4"></div><svg style="left:550px;top:48px" width="13" height="21" viewBox="0 0 13 21"><path d="M1 1 L1 15 L4.5 11.5 L7.5 19 L10 18 L7 10.5 L12 10.5 Z" fill="#eef0f8" stroke="#a0a4b8" stroke-width="1.2"/></svg><svg style="left:575px;top:52px" width="14" height="13" viewBox="0 0 14 13"><path d="M1 12 L13 1" stroke="#8a8a8a" stroke-width="1.4"/></svg><div class="a" style="left:597px;top:58px;width:14px;height:2px;background:#8a8a8a"></div><div class="a" style="left:625px;top:52px;width:2px;height:13px;background:#8a8a8a"></div><svg style="left:641px;top:51px" width="14" height="15" viewBox="0 0 14 15"><path d="M1 1.5 H13 M1 4.5 H13 M3 7.5 H11 M1 10.5 H13 M1 13.5 H13" stroke="#5a5a5a" stroke-width="1.3"/><path d="M11 4 L11 11" stroke="#5a5a5a"/></svg><svg style="left:665px;top:50px" width="16" height="19" viewBox="0 0 16 19"><path d="M0.5 0.5 L11 0.5 L15.5 5 L15.5 18.5 L0.5 18.5 Z" fill="#e8eef4" stroke="#a8b8c8"/><path d="M4 15 L8 4 L12 15" stroke="#8a8a8a" stroke-width="1.3" fill="none"/></svg><div class="a" style="left:689px;top:46px;width:1px;height:26px;background:#a8a8a4"></div><div class="a" style="left:692px;top:45px;width:26px;height:27px;background:#fff;border-top:2px solid #6a6a6a;border-left:2px solid #6a6a6a;border-right:1px solid #fff;border-bottom:1px solid #fff"></div><div class="a" style="left:694px;top:47px;width:23px;height:24px;border-right:2px solid #6a6a6a;border-bottom:2px solid #6a6a6a"></div><div class="a" style="left:702px;top:47px;width:1px;height:22px;background:#ddd"></div><svg style="left:704px;top:56px" width="9" height="5" viewBox="0 0 9 5"><path d="M0 0 L9 0 L4.5 5 Z" fill="#8a8a8a"/></svg><div class="a" style="left:720px;top:51px;width:29px;height:16px;background:#d8d8d8;border:2px solid #3a3a3a;border-radius:1px"></div><div class="a" style="left:752px;top:45px;width:12px;height:30px;background:linear-gradient(#f4f4f4,#c0c0c0 60%,#8a8a8a)"></div><svg style="left:755px;top:66px" width="7" height="6" viewBox="0 0 7 6"><path d="M0 0.5 H6" stroke="#fff"/><path d="M1 3 L6 3 L3.5 5.5 Z" fill="#fff"/></svg><svg style="left:969px;top:134px" width="19" height="19" viewBox="0 0 19 19"><defs><linearGradient id="sg" x1="0" y1="0" x2="1" y2="1"><stop offset="0" stop-color="#7878e8"/><stop offset="1" stop-color="#3030a8"/></linearGradient></defs><rect x="0.5" y="0.5" width="18" height="18" rx="2" fill="url(#sg)" stroke="#2a2a80" stroke-width="1"/><rect x="4" y="1.5" width="10" height="7" fill="#f4f4ff"/><rect x="6" y="12" width="7" height="5" fill="#d8d8f0"/><rect x="7" y="13" width="2" height="3" fill="#222"/></svg><svg style="left:997px;top:134px" width="19" height="19" viewBox="0 0 19 19"><defs><linearGradient id="sg" x1="0" y1="0" x2="1" y2="1"><stop offset="0" stop-color="#7878e8"/><stop offset="1" stop-color="#3030a8"/></linearGradient></defs><rect x="0.5" y="0.5" width="18" height="18" rx="2" fill="url(#sg)" stroke="#2a2a80" stroke-width="1"/><rect x="3.5" y="1.5" width="11" height="7" fill="#e02020"/><path d="M5 3 L13 7 M13 3 L5 7" stroke="#fff" stroke-width="1"/><rect x="6" y="12" width="7" height="5" fill="#d8d8f0"/><rect x="7" y="13" width="2" height="3" fill="#222"/></svg><svg style="left:1023px;top:134px" width="22" height="19" viewBox="0 0 22 19"><defs><linearGradient id="fg" x1="0" y1="0" x2="0" y2="1"><stop offset="0" stop-color="#fff0a0"/><stop offset="1" stop-color="#e8b030"/></linearGradient></defs><path d="M1 4 L7 4 L9 6 L16 6 L16 17 L1 17 Z" fill="#e8c860" stroke="#8a6a20" stroke-width="0.9"/><path d="M4 9 L21 9 L17 18 L1 18 Z" fill="url(#fg)" stroke="#8a6a20" stroke-width="0.9"/><path d="M12 4 Q15 0 19 2" stroke="#6080b0" stroke-width="2" fill="none"/><path d="M18 0 L21 3 L17 5 Z" fill="#406090"/></svg><svg style="left:1057px;top:134px" width="19" height="19" viewBox="0 0 19 19"><rect x="1" y="1" width="7" height="7" fill="#fff" stroke="#334466" stroke-width="1.6"/><rect x="11" y="1" width="7" height="7" fill="#fff" stroke="#334466" stroke-width="1.6"/><rect x="1" y="11" width="7" height="7" fill="#fff" stroke="#334466" stroke-width="1.6"/><rect x="11" y="11" width="7" height="7" fill="#fff" stroke="#334466" stroke-width="1.6"/><rect x="3" y="3" width="3" height="3" fill="#3a6ad0"/><rect x="13" y="3" width="3" height="3" fill="#3a6ad0"/><rect x="3" y="13" width="3" height="3" fill="#3a6ad0"/><rect x="13" y="13" width="3" height="3" fill="#3a6ad0"/></svg><svg style="left:1087px;top:135px" width="21" height="17" viewBox="0 0 21 17"><path d="M1 1 L8 1 L11 4 L11 12 L1 12 Z" fill="#f0f4fc" stroke="#4a6aa0" stroke-width="1"/><path d="M3 5 H9 M3 7 H9 M3 9 H9" stroke="#6a8ac8" stroke-width="0.9"/><path d="M8 5 L16 5 L20 9 L20 16 L8 16 Z" fill="#dce6f8" stroke="#2a4a80" stroke-width="1.2"/><path d="M10 9 H18 M10 11 H18 M10 13 H18" stroke="#4a72c8" stroke-width="1"/></svg><svg style="left:1118px;top:134px" width="13" height="19" viewBox="0 0 13 19"><path d="M3 0 L8 11 M10 0 L5 11" stroke="#505868" stroke-width="1.5"/><circle cx="3.5" cy="15" r="2.8" fill="none" stroke="#2a4a9a" stroke-width="2.2"/><circle cx="9.5" cy="15" r="2.8" fill="none" stroke="#2a4a9a" stroke-width="2.2"/></svg><svg style="left:1143px;top:135px" width="21" height="18" viewBox="0 0 21 18"><g opacity="0.55"><rect x="1" y="2" width="13" height="15" rx="1" fill="#e8c850" stroke="#9a8030"/><rect x="4" y="0.5" width="7" height="3" fill="#c0b080"/><rect x="9" y="8" width="11" height="9" fill="#e8eef8" stroke="#7080a0"/><path d="M11 11 H18 M11 13 H18" stroke="#8090b0"/></g></svg><svg style="left:1177px;top:135px" width="17" height="17" viewBox="0 0 17 17"><path d="M2 2 L15 15 M15 2 L2 15" stroke="#111" stroke-width="2.6" stroke-linecap="round"/></svg><svg style="left:1207px;top:135px" width="19" height="19" viewBox="0 0 19 19"><g opacity="0.6"><rect x="0.5" y="13" width="5" height="5" fill="#555"/><rect x="13" y="0.5" width="5" height="5" fill="#555"/><path d="M4 14 L14 4" stroke="#777" stroke-width="1.4"/></g></svg><svg style="left:1235px;top:135px" width="19" height="19" viewBox="0 0 19 19"><g opacity="0.6"><rect x="0.5" y="13" width="5" height="5" fill="#555"/><rect x="13" y="0.5" width="5" height="5" fill="#555"/><path d="M4 14 L14 4" stroke="#777" stroke-width="1.4"/></g><path d="M6 6 L12 12 M12 6 L6 12" stroke="#f07070" stroke-width="1.2"/></svg>
</body></html>
